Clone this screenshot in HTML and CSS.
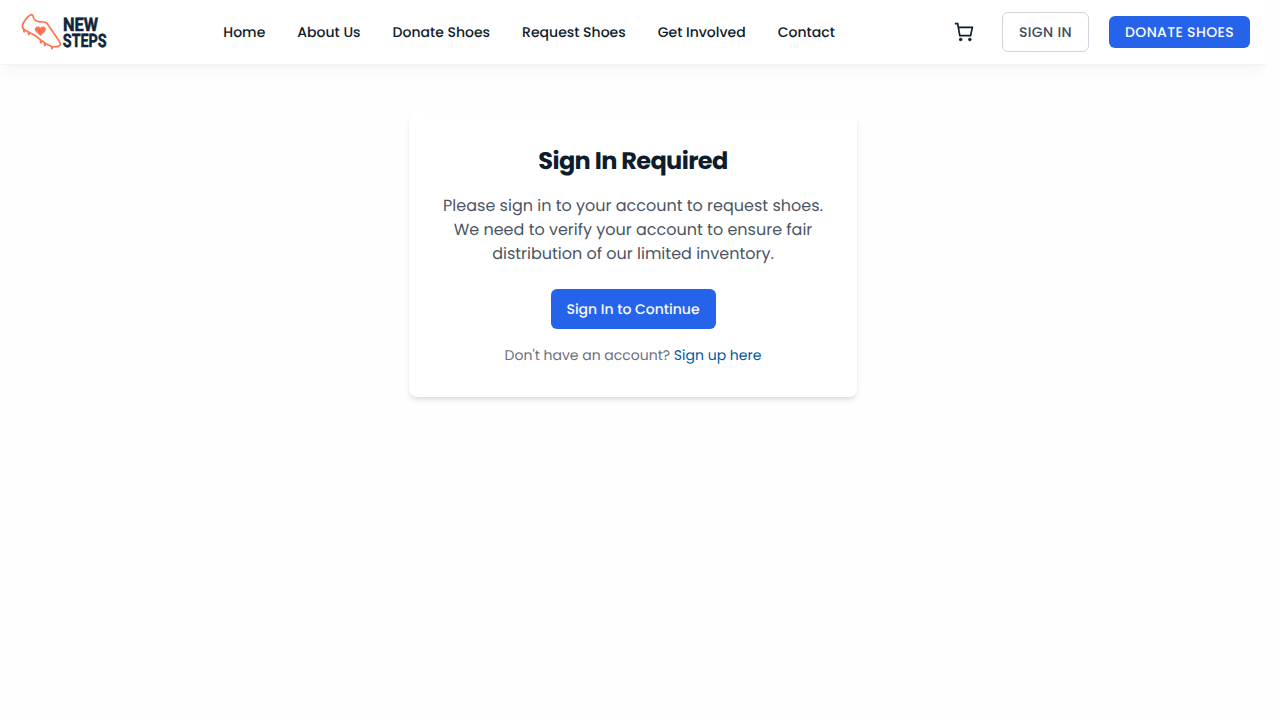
FILE: index.html
```html
<!DOCTYPE html>
<html lang="en">
<head>
<meta charset="utf-8">
<title>New Steps</title>
<link rel="stylesheet" href="styles.css">
</head>
<body>
<header class="header">
  <a class="logo" aria-label="New Steps">
    <svg width="88" height="40" viewBox="0 0 88 40">
      <g fill="none" stroke="#ff7550" stroke-width="1.7" stroke-linejoin="round" stroke-linecap="round">
        <path d="M11.7 2.6 C9 3.2 5.3 7.4 3.3 11 C2 13.5 2.2 15.5 3.4 17.2 C7.5 19.8 12.5 21.5 16.5 24.5 C21 28.2 25.5 32.5 31 34.2 C34.5 35.2 38.3 35.2 40.2 33.2 C40.8 31.8 39.5 29.6 38 27.3 L27.6 12.3 C26.8 10.4 25.3 10 23.5 10 C19 10 14.8 8.8 13.7 6.3 C13.2 4.7 13.2 2.6 11.7 2.6 Z"/>
        <path d="M4.2 18v1.5M8.8 20.8v1.5M20.8 29v1.5M24.8 32v1.3M32 35.3v1" stroke-width="2.3"/>
      </g>
      <path d="M20.4 24 L15.6 19.2 C12.8 16 17.8 12.3 20.4 15.8 C23 12.3 28 16 25.2 19.2 Z" fill="#ff7550"/>
      <g class="logo-text"><text transform="translate(43 18.8) scale(.77 1)" textLength="45.5" lengthAdjust="spacingAndGlyphs">NEW</text><text transform="translate(42.8 35) scale(.77 1)" textLength="57" lengthAdjust="spacingAndGlyphs">STEPS</text></g>
    </svg>
  </a>
  <nav class="nav">
    <a>Home</a><a>About Us</a><a>Donate Shoes</a><a>Request Shoes</a><a>Get Involved</a><a>Contact</a>
  </nav>
  <div class="actions">
    <svg class="cart" width="20" height="20" viewBox="0 0 24 24" fill="none" stroke="#0f1c2b" stroke-width="2" stroke-linejoin="miter"><g fill="#0f1c2b" stroke-width="1"><circle cx="8" cy="21" r="1.6"/><circle cx="19" cy="21" r="1.6"/></g><path d="M1 2h3.4l2.6 14.4h12.9L22 6.4H5.2"/></svg>
    <a class="button outline">SIGN IN</a>
    <a class="button donate">DONATE SHOES</a>
  </div>
</header>
<main class="main">
  <section class="card">
    <h1>Sign In Required</h1>
    <p class="message">Please sign in to your account to request shoes.<br>We need to verify your account to ensure fair<br>distribution of our limited inventory.</p>
    <a class="button continue">Sign In to Continue</a>
    <p class="signup">Don't have an account? <a>Sign up here</a></p>
  </section>
</main>
</body>
</html>
```
FILE: styles.css
```css
* { box-sizing: border-box; }
body { margin: 0; width: 1266px; background: #fefefe; color: #0f1c2b; font-family: Poppins, Inter, sans-serif; text-rendering: geometricPrecision; }
.header { height: 65px; padding: 0 16px 0 20px; display: flex; align-items: center; background: #fff; border-bottom: 1px solid #f3f3f3; box-shadow: 0 10px 15px -3px rgba(0,0,0,.03), 0 4px 6px -4px rgba(0,0,0,.03); }
.logo { display: flex; width: 203.3px; }
.logo svg { overflow: visible; }
.logo-text { font: 700 18.5px Roboto, sans-serif; fill: #10243c; stroke: #10243c; stroke-width: .5; }
.nav { display: flex; gap: 32px; font-size: 14px; font-weight: 500; line-height: 20px; white-space: nowrap; }
.actions { display: flex; align-items: center; gap: 20px; margin-left: auto; }
.cart { margin-right: 8px; }
.button { display: flex; align-items: center; justify-content: center; height: 40px; border-radius: 6px; font-size: 14px; font-weight: 500; white-space: nowrap; background: #2563eb; color: #f8fafc; }
.outline { width: 87px; background: #fff; border: 1px solid #d1d5db; color: #414b5a; letter-spacing: .025em; }
.donate { width: 141px; height: 32px; letter-spacing: .025em; }
.main { display: flex; justify-content: center; align-items: flex-start; padding-top: 48px; min-height: 655px; }
.card { width: 448px; height: 284px; padding: 33px 32px 31px; border-radius: 8px; background: #fff; display: flex; flex-direction: column; align-items: center; box-shadow: 0 4px 6px -1px rgba(0,0,0,.1), 0 2px 4px -2px rgba(0,0,0,.1); }
h1 { margin: 0 0 16px; font-size: 24px; line-height: 32px; font-weight: 700; letter-spacing: -.025em; }
.message { margin: 0 0 23px; font-size: 16px; line-height: 24px; color: #4b5563; text-align: center; white-space: nowrap; }
.continue { width: 165px; }
.signup { margin: 16px 0 0; font-size: 14px; line-height: 20px; color: #6b7280; white-space: nowrap; }
.signup a { color: #005a9c; }
```
